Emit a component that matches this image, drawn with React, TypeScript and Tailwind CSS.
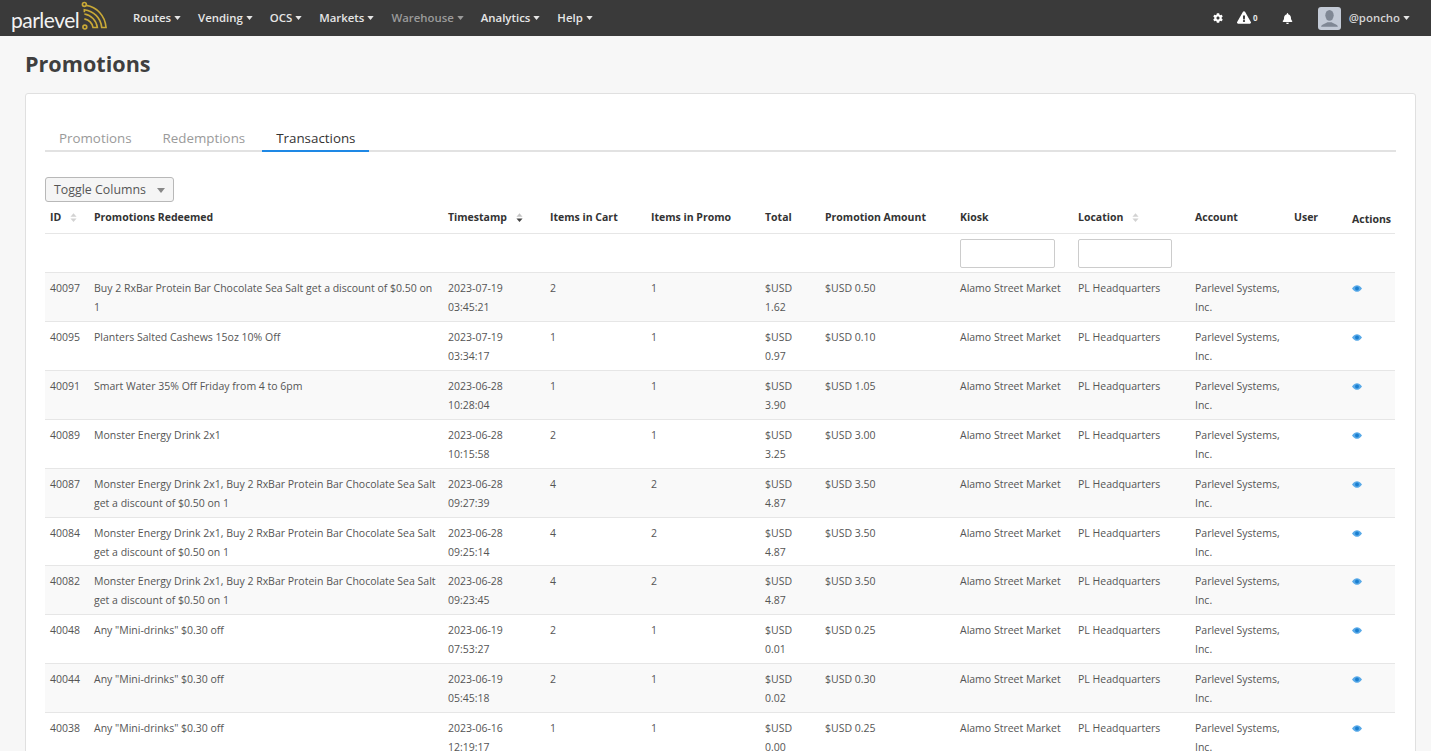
import React from 'react';
import { FaBell, FaCog, FaExclamationTriangle } from 'react-icons/fa';

const navItems = ['Routes', 'Vending', 'OCS', 'Markets', 'Warehouse', 'Analytics', 'Help'];

const promo2x1 = 'Monster Energy Drink 2x1, Buy 2 RxBar Protein Bar Chocolate Sea Salt get a discount of $0.50 on 1';

const rows = [
  { id: '40097', promo: 'Buy 2 RxBar Protein Bar Chocolate Sea Salt get a discount of $0.50 on 1', date: '2023-07-19', time: '03:45:21', cart: 2, inPromo: 1, total: '1.62', amount: '0.50' },
  { id: '40095', promo: 'Planters Salted Cashews 15oz 10% Off', date: '2023-07-19', time: '03:34:17', cart: 1, inPromo: 1, total: '0.97', amount: '0.10' },
  { id: '40091', promo: 'Smart Water 35% Off Friday from 4 to 6pm', date: '2023-06-28', time: '10:28:04', cart: 1, inPromo: 1, total: '3.90', amount: '1.05' },
  { id: '40089', promo: 'Monster Energy Drink 2x1', date: '2023-06-28', time: '10:15:58', cart: 2, inPromo: 1, total: '3.25', amount: '3.00' },
  { id: '40087', promo: promo2x1, date: '2023-06-28', time: '09:27:39', cart: 4, inPromo: 2, total: '4.87', amount: '3.50' },
  { id: '40084', promo: promo2x1, date: '2023-06-28', time: '09:25:14', cart: 4, inPromo: 2, total: '4.87', amount: '3.50' },
  { id: '40082', promo: promo2x1, date: '2023-06-28', time: '09:23:45', cart: 4, inPromo: 2, total: '4.87', amount: '3.50' },
  { id: '40048', promo: 'Any "Mini-drinks" $0.30 off', date: '2023-06-19', time: '07:53:27', cart: 2, inPromo: 1, total: '0.01', amount: '0.25' },
  { id: '40044', promo: 'Any "Mini-drinks" $0.30 off', date: '2023-06-19', time: '05:45:18', cart: 2, inPromo: 1, total: '0.02', amount: '0.30' },
  { id: '40038', promo: 'Any "Mini-drinks" $0.30 off', date: '2023-06-16', time: '12:19:17', cart: 1, inPromo: 1, total: '0.00', amount: '0.25' },
];

function Caret({ className = 'w-[7px] h-[4px]' }: { className?: string }) {
  return (
    <svg viewBox="0 0 8 5" className={`inline-block ${className}`} fill="currentColor">
      <path d="M0 0h8L4 5z" />
    </svg>
  );
}

function SortIcon({ active = false }: { active?: boolean }) {
  return (
    <svg viewBox="0 0 8 10" className="inline-block w-[7px] h-[9px] ml-[9px] align-[-1px]">
      <path d="M4 0l3.500 4h-7z" fill={active ? '#c4c4c4' : '#d2d2d2'} />
      <path d="M4 10L.5 6h7z" fill={active ? '#444444' : '#d2d2d2'} />
    </svg>
  );
}

function EyeIcon() {
  return (
    <svg viewBox="0 0 12 8" className="w-[10px] h-[7px] mt-[6px]">
      <path d="M0 4C2 1 4 0 6 0s4 1 6 4c-2 3-4 4-6 4S2 7 0 4z" fill="#5aaae8" />
      <circle cx="6" cy="4" r="2.300" fill="#1b7fd0" />
    </svg>
  );
}

function Logo() {
  return (
    <div className="flex items-center w-[133px] pl-[11px]">
      <span className="font-['Lato',sans-serif] text-[21px] font-normal text-[#f2f2f2] tracking-[-0.5px] leading-none mt-[2px]">parlevel</span>
      <svg viewBox="0 0 28 30" className="w-[27px] h-[29px] -mt-[5px] ml-[2px]" fill="none" stroke="#c9a937" strokeWidth="1.700">
        <circle cx="3.500" cy="3.500" r="2" />
        <path d="M5.500 4.500 C16 6 25 15 26 27.500 H21.500 C20.500 17 13 10.500 3.500 9 V11.500" />
        <path d="M3.500 13.500 C10.500 14.500 16 20 17 27.500 H12.500 C11.500 22.500 8 19.500 3.500 18.500" />
        <circle cx="4" cy="27" r="2" />
      </svg>
    </div>
  );
}

function Navbar() {
  return (
    <div className="h-[36px] bg-[#3a3a3a] flex items-center shrink-0 font-['Open_Sans',sans-serif] text-[11.4px] font-semibold text-[#e6e6e6]">
      <Logo />
      <nav className="flex items-center gap-[17px]">
        {navItems.map((item) => (
          <span key={item} className={`flex items-center gap-[3px] ${item === 'Warehouse' ? 'text-[#9a9a9a]' : ''}`}>
            {item}
            <Caret />
          </span>
        ))}
      </nav>
      <div className="ml-auto flex items-center pr-[21px]">
        <FaCog className="w-[10px] h-[10px] text-white" />
        <FaExclamationTriangle className="w-[14px] h-[13px] text-white ml-[14px] -mt-[2px]" />
        <span className="text-[8px] ml-[2px] font-bold">0</span>
        <FaBell className="w-[11px] h-[11px] text-white ml-[24px]" />
        <div className="w-[23px] h-[23px] rounded-[3px] bg-[#c3cad6] ml-[25px] overflow-hidden">
          <svg viewBox="0 0 22 22" className="w-full h-full" fill="#7f8794">
            <ellipse cx="11" cy="8" rx="4" ry="5.200" />
            <path d="M3 19c0-2.600 4-3 6-4.500h4c2 1.500 6 1.900 6 4.500z" />
          </svg>
        </div>
        <span className="ml-[8px] mr-[3px] text-[#d4d4d4]">@poncho</span>
        <Caret />
      </div>
    </div>
  );
}

function Tabs() {
  return (
    <div className="flex border-b-2 border-[#e2e2e2] h-[24px] text-[13.350px] text-[#9a9a9a]">
      <span className="px-[14px] mr-[3px] h-[24px] leading-[20px]">Promotions</span>
      <span className="px-[14px] mr-[3px] h-[24px] leading-[20px]">Redemptions</span>
      <span className="px-[14px] h-[24px] leading-[20px] text-[#333333] border-b-2 border-[#1e88e5]">Transactions</span>
    </div>
  );
}

function PromoTable() {
  return (
    <table className="w-[1350px] table-fixed border-collapse text-[10.5px] text-[#555555]">
      <colgroup>
        <col className="w-[44px]" />
        <col className="w-[354px]" />
        <col className="w-[102px]" />
        <col className="w-[101px]" />
        <col className="w-[114px]" />
        <col className="w-[60px]" />
        <col className="w-[135px]" />
        <col className="w-[118px]" />
        <col className="w-[117px]" />
        <col className="w-[99px]" />
        <col className="w-[58px]" />
        <col className="w-[48px]" />
      </colgroup>
      <thead>
        <tr className="h-[31px] border-b border-[#e6e6e6] text-left font-bold text-[#333333] align-top">
          <th className="pl-[5px] pt-[8px]">ID<SortIcon /></th>
          <th className="pl-[5px] pt-[8px]">Promotions Redeemed</th>
          <th className="pl-[5px] pt-[8px]">Timestamp<SortIcon active /></th>
          <th className="pl-[5px] pt-[8px]">Items in Cart</th>
          <th className="pl-[5px] pt-[8px]">Items in Promo</th>
          <th className="pl-[5px] pt-[8px]">Total</th>
          <th className="pl-[5px] pt-[8px]">Promotion Amount</th>
          <th className="pl-[5px] pt-[8px]">Kiosk</th>
          <th className="pl-[5px] pt-[8px]">Location<SortIcon /></th>
          <th className="pl-[5px] pt-[8px]">Account</th>
          <th className="pl-[5px] pt-[8px]">User</th>
          <th className="pl-[5px] pt-[10px]">Actions</th>
        </tr>
        <tr className="h-[39px] border-b border-[#e6e6e6]">
          <td colSpan={7} />
          <td className="pl-[5px] pt-[1px]">
            <input className="block w-[95px] h-[29px] bg-white border border-[#cccccc] rounded-[2px]" />
          </td>
          <td className="pl-[5px] pt-[1px]">
            <input className="block w-[94px] h-[29px] bg-white border border-[#cccccc] rounded-[2px]" />
          </td>
          <td colSpan={3} />
        </tr>
      </thead>
      <tbody>
        {rows.map((row, i) => (
          <tr key={row.id} className={`${i === 5 ? 'h-[48px]' : 'h-[49px]'} border-b border-[#e6e6e6] align-top leading-[19px] ${i % 2 === 0 ? 'bg-[#f9f9f9]' : 'bg-white'}`}>
            <td className="pl-[5px] pt-[6px]">{row.id}</td>
            <td className="pl-[5px] pr-[5px] pt-[6px]">{row.promo}</td>
            <td className="pl-[5px] pt-[6px]">{row.date}<br />{row.time}</td>
            <td className="pl-[5px] pt-[6px]">{row.cart}</td>
            <td className="pl-[5px] pt-[6px]">{row.inPromo}</td>
            <td className="pl-[5px] pt-[6px]">$USD<br />{row.total}</td>
            <td className="pl-[5px] pt-[6px]">$USD {row.amount}</td>
            <td className="pl-[5px] pt-[6px]">Alamo Street Market</td>
            <td className="pl-[5px] pt-[6px]">PL Headquarters</td>
            <td className="pl-[5px] pt-[6px]">Parlevel Systems,<br />Inc.</td>
            <td />
            <td className="pl-[5px] pt-[6px]">
              <EyeIcon />
            </td>
          </tr>
        ))}
      </tbody>
    </table>
  );
}

export default function App() {
  return (
    <div className="h-[751px] overflow-hidden flex flex-col bg-[#f7f7f7] font-['Open_Sans',sans-serif]">
      <Navbar />
      <main className="px-[25px] pt-[14px]">
        <h1 className="text-[21.6px] leading-[28px] font-bold text-[#3f3f3f]">Promotions</h1>
        <div className="mt-[15px] w-[1391px] bg-white border border-[#e0e0e0] rounded-[3px] px-[19px] pt-[34px]">
          <Tabs />
          <button className="mt-[25px] block w-[129px] h-[25px] pl-[8px] pt-[1px] text-left bg-[#f5f5f5] border border-[#b8b8b8] rounded-[3px] text-[12.400px] text-[#555555]">
            Toggle Columns
            <Caret className="ml-[11px] w-[8px] h-[5px] text-[#888888]" />
          </button>
          <PromoTable />
        </div>
      </main>
    </div>
  );
}
